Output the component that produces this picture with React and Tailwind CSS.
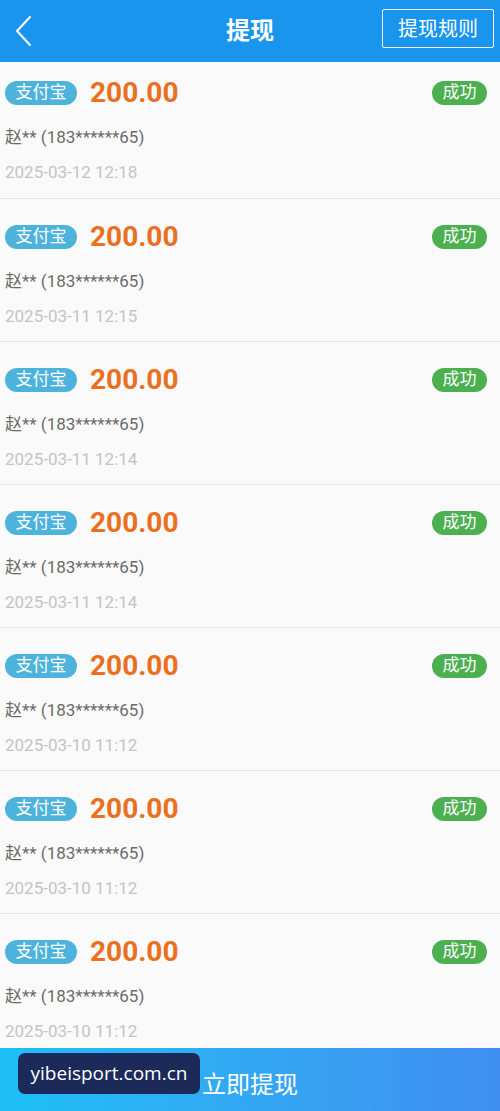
const RECORDS = [
  { date: "2025-03-12 12:18" },
  { date: "2025-03-11 12:15" },
  { date: "2025-03-11 12:14" },
  { date: "2025-03-11 12:14" },
  { date: "2025-03-10 11:12" },
  { date: "2025-03-10 11:12" },
  { date: "2025-03-10 11:12" },
];

const FONT = { fontFamily: 'Roboto, "Noto Sans CJK SC", sans-serif' };

function Row({ date, first }) {
  return (
    <div
      className={`relative border-b border-[#e6e6e6] px-[5px] ${
        first ? "pt-[17px] pb-[13px]" : "pt-[24px] pb-[12px]"
      }`}
    >
      <div className="flex h-[28px] items-center">
        <span className="flex h-[24px] w-[72px] items-center justify-center rounded-full bg-[#4db3dc] text-[17px] text-white">
          支付宝
        </span>
        <span className="ml-[13px] text-[28px] font-bold leading-none text-[#ea7020]">
          200.00
        </span>
        <span className="ml-auto mr-[8px] flex h-[24px] w-[55px] items-center justify-center rounded-full bg-[#4caf50] text-[17px] text-white">
          成功
        </span>
      </div>
      <div className="mt-[19px] flex h-[24px] items-center text-[17px] text-[#6b6b6b]">
        赵** (183******65)
      </div>
      <div className="mt-[11px] flex h-[24px] items-center text-[17px] text-[#c4c4c4]">
        {date}
      </div>
    </div>
  );
}

export default function App() {
  return (
    <div className="flex h-[1111px] w-[500px] flex-col bg-[#fafafa]" style={FONT}>
      <header className="relative flex h-[62px] shrink-0 items-center justify-center bg-[#1995ee]">
        <svg
          className="absolute left-[12px] top-[15px]"
          width="22"
          height="32"
          viewBox="0 0 22 32"
          fill="none"
        >
          <path d="M18 2 L5 16 L18 30" stroke="white" strokeWidth="2" strokeLinecap="round" strokeLinejoin="round" />
        </svg>
        <h1 className="text-[24px] font-bold text-white">提现</h1>
        <button className="absolute right-[6px] top-[9px] flex h-[39px] w-[112px] items-center justify-center rounded-[2px] border-[1.5px] border-white text-[20px] text-white">
          提现规则
        </button>
      </header>

      <div className="flex-1 overflow-hidden">
        {RECORDS.map((r, i) => (
          <Row key={i} date={r.date} first={i === 0} />
        ))}
      </div>

      <div className="relative flex h-[63px] shrink-0 items-center justify-center bg-gradient-to-r from-[#1cc0f6] to-[#3f8ef0]">
        <span className="mt-[10px] text-[24px] text-white">立即提现</span>
        <div className="absolute left-[18px] top-[5px] flex h-[41px] w-[182px] items-center justify-center rounded-[7px] bg-[#1b2a58]">
          <span
            className="text-[19px] text-white"
            style={{ fontFamily: '"Open Sans", "Noto Sans", sans-serif' }}
          >
            yibeisport.com.cn
          </span>
        </div>
      </div>
    </div>
  );
}
